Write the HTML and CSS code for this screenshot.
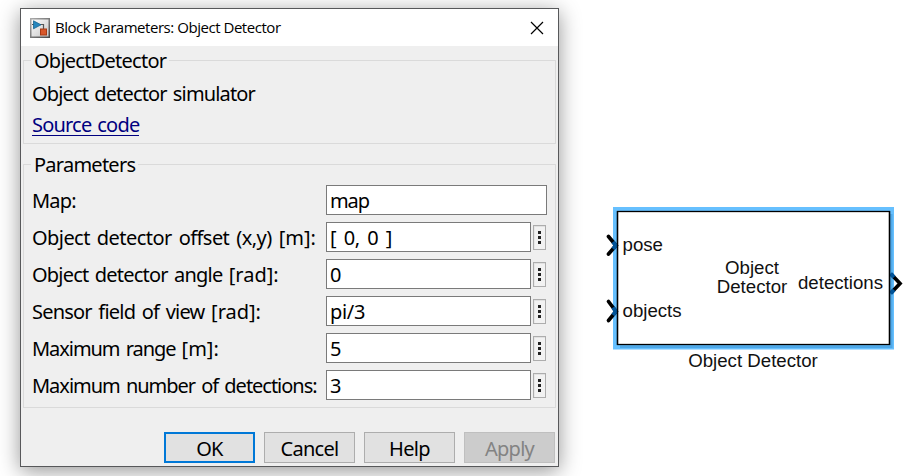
FILE: index.html
```html
<!DOCTYPE html>
<html lang="en">
<head>
<meta charset="utf-8">
<title>Block Parameters: Object Detector</title>
<link rel="stylesheet" href="styles.css">
</head>
<body>
<main class="canvas">
  <section class="dialog">
    <header class="titlebar">
      <svg class="app-icon" width="20" height="20" viewBox="0 0 20 20">
        <defs>
          <linearGradient id="tile" x1="0" y1="0" x2="1" y2="1"><stop offset="0" stop-color="#fff"/><stop offset="1" stop-color="#c4c4c4"/></linearGradient>
          <linearGradient id="frame" x1="0" y1="0" x2="1" y2="1"><stop offset="0" stop-color="#aaa"/><stop offset="1" stop-color="#4b4b4b"/></linearGradient>
        </defs>
        <rect x=".75" y=".75" width="18.5" height="18.5" fill="url(#tile)" stroke="url(#frame)" stroke-width="1.5"/>
        <path d="M2 6.5H4M10 6.5H13.5V11" fill="none" stroke="#555" stroke-width="1.2"/>
        <path d="M3.5 2.8 11 6.8 3.5 10.8Z" fill="#2586bd" stroke="#17658f" stroke-width=".8"/>
        <rect x="10.5" y="11" width="6" height="6" fill="#d9582b" stroke="#a83a14"/>
      </svg>
      <h1 class="title">Block Parameters: Object Detector</h1>
      <svg class="close" width="14" height="14" viewBox="0 0 14 14"><path d="M1 1 13 13M13 1 1 13" stroke="#000" stroke-width="1.2"/></svg>
    </header>

    <fieldset class="group about">
      <legend>ObjectDetector</legend>
      <p class="desc">Object detector simulator</p>
      <a class="link">Source code</a>
    </fieldset>

    <fieldset class="group params">
      <legend>Parameters</legend>
      <div class="row"><span class="label">Map:</span><span class="field wide">map</span></div>
      <div class="row"><span class="label offset">Object detector offset (x,y) <span class="unit">[m]:</span></span><span class="field vector">[ 0, 0 ]</span><span class="more"><i></i><i></i><i></i></span></div>
      <div class="row"><span class="label">Object detector angle <span class="unit">[rad]:</span></span><span class="field">0</span><span class="more"><i></i><i></i><i></i></span></div>
      <div class="row"><span class="label fov">Sensor field of view <span class="unit">[rad]:</span></span><span class="field">pi/3</span><span class="more"><i></i><i></i><i></i></span></div>
      <div class="row"><span class="label range">Maximum range <span class="unit">[m]:</span></span><span class="field">5</span><span class="more"><i></i><i></i><i></i></span></div>
      <div class="row"><span class="label count">Maximum number of detections:</span><span class="field">3</span><span class="more"><i></i><i></i><i></i></span></div>
    </fieldset>

    <footer class="buttons">
      <span class="btn primary">OK</span>
      <span class="btn">Cancel</span>
      <span class="btn">Help</span>
      <span class="btn disabled">Apply</span>
    </footer>
  </section>

  <svg class="diagram" width="310" height="190" viewBox="600 195 310 190">
    <rect x="613" y="207" width="281" height="142.500" fill="#66c0ff"/>
    <path d="M890 214H892.500V348H620V345.500H890Z" fill="#4fa8e8"/>
    <rect x="617.500" y="211.500" width="272" height="133" fill="#fff" stroke="#000" stroke-width="1.300"/>
    <g fill="none" stroke="#000" stroke-width="3.700" stroke-linecap="round">
      <path d="M608.500 236.500 616 245.500 608.500 254"/>
      <path d="M608.500 301.500 616 311.500 608.500 320.500"/>
      <path d="M891 274 900 283.500 891 293" stroke-linecap="butt"/>
    </g>
    <g fill="none" stroke="#00549a" stroke-width="3.900">
      <path d="M613 241.900 616 245.500 613 248.900"/>
      <path d="M613 307.500 616 311.500 613 315.100"/>
      <path d="M890.500 273.500 894 277.200M890.500 293.500 894 289.800"/>
    </g>
    <path d="M617.500 211V345M889.500 211V345" stroke="#000" stroke-width="1.300"/>
    <g class="block-text">
      <text x="622.500" y="251">pose</text>
      <text x="622.500" y="317">objects</text>
      <text x="752" y="274" text-anchor="middle">Object</text>
      <text x="752" y="293" text-anchor="middle">Detector</text>
      <text x="883" y="289" text-anchor="end">detections</text>
      <text x="753" y="367" text-anchor="middle">Object Detector</text>
    </g>
  </svg>
</main>
</body>
</html>
```
FILE: styles.css
```css
* { box-sizing: border-box; }
body { margin: 0; background: #fff; overflow: hidden; }
.canvas { display: flex; width: 915px; height: 476px; overflow: hidden; }
.dialog {
  flex: none; width: 539px; height: 459px; margin: 8px 0 0 20px;
  border: 1px solid #57585a; background: #efefef;
  box-shadow: 0 4px 20px rgba(0, 0, 0, .42);
  font: 20px/26px "Noto Sans", sans-serif; color: #000; white-space: nowrap;
}
.titlebar { display: flex; align-items: center; height: 37px; padding: 0 14px 0 9px; background: #fff; }
.title { margin: -2px 0 0 5px; font: 15px/20px "Open Sans", sans-serif; letter-spacing: -.46px; }
.app-icon { flex: none; }
.close { margin-left: auto; }
.group { margin: 0 2px; padding: 0 8px; border: 1px solid #dadada; min-width: 0; }
legend { margin-left: -1px; padding: 1px 3px 0; height: 26px; line-height: 26px; letter-spacing: -.75px; }
.about { height: 97px; margin-top: 1px; }
.about p { margin: 8px 0 0; letter-spacing: -.85px; word-spacing: 1.8px; }
.link { display: inline-block; height: 24px; margin-top: 5px; border-bottom: 1px solid #000080; color: #000080; letter-spacing: -.8px; word-spacing: 1.5px; }
.params { height: 257px; margin-top: 7px; padding-top: 8px; }
.row { display: flex; align-items: center; height: 30px; margin-bottom: 7px; }
.label { flex: none; width: 294px; padding-top: 2px; letter-spacing: -.8px; word-spacing: 2px; }
.offset { letter-spacing: -.56px; word-spacing: 2.4px; }
.fov { letter-spacing: -.8px; word-spacing: 2.2px; }
.range { letter-spacing: -1.05px; }
.count { letter-spacing: -1.02px; }
.unit { letter-spacing: 0; }
.field { width: 205px; height: 30px; padding: 2px 3px 0; border: 1px solid #7a7a7a; background: #fff; letter-spacing: -.3px; }
.vector { word-spacing: 2.5px; }
.wide { width: 221px; letter-spacing: -1.1px; }
.more {
  display: flex; flex-direction: column; align-items: center; justify-content: center; gap: 2px;
  width: 13px; height: 25px; margin-left: 2px; border: 1px solid #adadad;
  background: #f2f2f2; box-shadow: inset 0 1px #e1e1e1, inset 1px 0 #e8e8e8;
}
.more i { width: 3px; height: 3px; background: #222; }
.buttons { display: flex; justify-content: flex-end; gap: 9px; margin: 24px 3px 0 0; }
.btn { width: 91px; height: 31px; padding-top: 3px; border: 1px solid #adadad; background: #e1e1e1; text-align: center; letter-spacing: -.7px; }
.primary { border: 2px solid #0078d7; padding-top: 2px; }
.disabled { border-color: #bfbfbf; background: #ccc; color: #838383; }
.diagram { flex: none; margin: 195px 0 0 41px; }
.block-text { font: 18.67px "Liberation Sans", sans-serif; fill: #111; }
```
